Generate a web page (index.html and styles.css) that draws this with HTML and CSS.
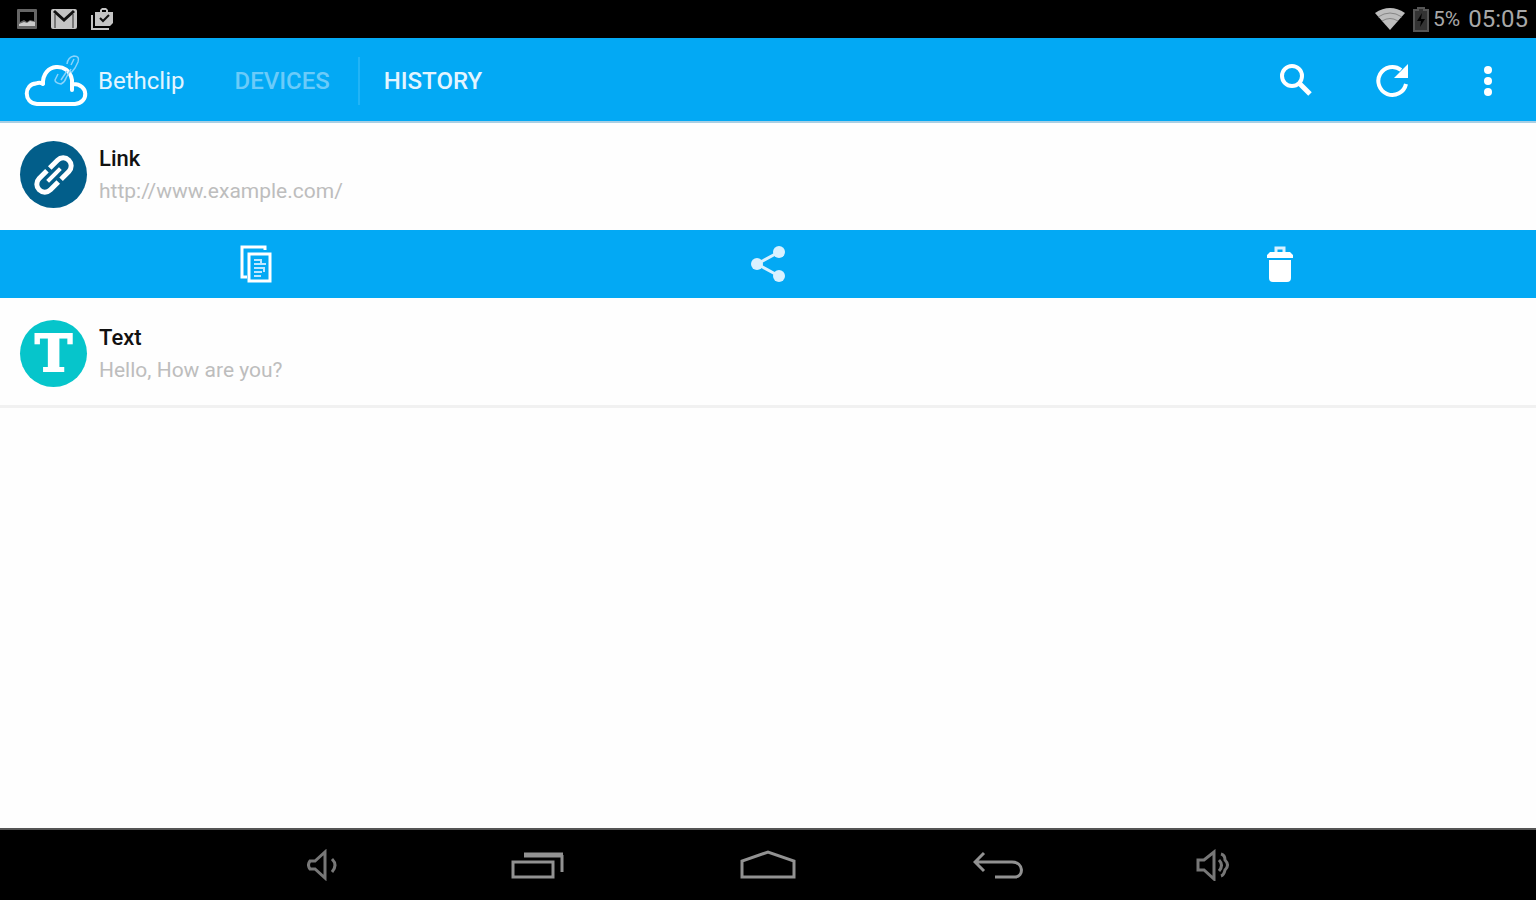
FILE: index.html
```html
<!DOCTYPE html>
<html lang="en">
<head>
<meta charset="utf-8">
<meta name="viewport" content="width=device-width, initial-scale=1">
<title>Bethclip</title>
<link rel="stylesheet" href="styles.css">
</head>
<body>
<div class="status-bar">
  <div class="status-left">
    <svg width="22" height="22" viewBox="0 0 22 22"><rect x="1" y="1" width="20" height="20" rx="1" fill="#666"/><path d="M4 4h14v9l-4-1-3 2-3-2-4 2z" fill="#000"/><path d="M3 16l5-2 3 1 3-2 5 1v4H3z" fill="#ccc"/></svg>
    <svg width="28" height="22" viewBox="0 0 28 22"><rect x="1" y="1" width="26" height="20" rx="2" fill="#c4c4c4"/><path d="M5 20V6M23 20V6" fill="none" stroke="#777" stroke-width="2"/><path d="M4 3l10 9 10-9" fill="none" stroke="#111" stroke-width="3"/></svg>
    <svg width="24" height="24" viewBox="0 0 24 24"><path d="M2 8v14h17" fill="none" stroke="#c4c4c4" stroke-width="2"/><path d="M5 5h5V3l2-2h4l2 2v2h5v11l-3 3H5zM12 5h4V3h-4z" fill="#c4c4c4" fill-rule="evenodd"/><path d="M10 11l3 3 6-6" fill="none" stroke="#111" stroke-width="2"/></svg>
  </div>
  <div class="status-right">
    <svg width="30" height="22" viewBox="0 0 30 22"><path d="M0 5Q15-5 30 5L15 22z" fill="#bdbdbd"/><path d="M3 9q12-8 24 0M7 13q8-5 16 0" fill="none" stroke="#858585"/></svg>
    <svg class="battery" width="16" height="25" viewBox="0 0 16 25"><path d="M5 1h6v2h4v21H1V3h4z" fill="#333" stroke="#555" stroke-width="2"/><path d="M9 6l-5 8h4l-1 6 5-8H8z" fill="#000"/></svg>
    <span class="percent">5%</span>
    <span class="clock">05:05</span>
  </div>
</div>
<header class="app-bar">
  <svg class="logo" width="64" height="54" viewBox="0 0 64 54"><path d="M13 50C-1 49 0 30 12 29.500Q16 28 19 30C18 9 45 7 48 26V36M49 30C65 30 65 49 51 50H13" fill="none" stroke="#fff" stroke-width="4" stroke-linecap="round" stroke-linejoin="round"/><path d="M43 10q1-7 7-8 6 0 4 6l-3 6-4 5M47 11l3-6M34 20l-3 6q0 3 6 4 4-2 5-6l5-9M37 26l6-9" fill="none" stroke="#8ad4fc" stroke-width="1.500" stroke-linejoin="round"/></svg>
  <h1 class="title">Bethclip</h1>
  <nav class="tabs">
    <button class="tab">DEVICES</button>
    <button class="tab tab-active">HISTORY</button>
  </nav>
  <div class="tools">
    <button class="tool" aria-label="Search"><svg width="34" height="34" viewBox="0 0 34 34" fill="none" stroke="#fff"><circle cx="13" cy="12" r="10" stroke-width="4"/><path d="M20 19l11 11" stroke-width="5"/></svg></button>
    <button class="tool" aria-label="Refresh"><svg width="34" height="34" viewBox="0 0 34 34"><path d="M26 6A14 14 0 1 0 31 20" fill="none" stroke="#fff" stroke-width="4"/><path d="M33 0v14H19z" fill="#fff"/></svg></button>
    <button class="tool" aria-label="More options"><svg width="10" height="32" viewBox="0 0 10 32" fill="#fff"><circle cx="5" cy="5" r="4"/><circle cx="5" cy="16" r="4"/><circle cx="5" cy="27" r="4"/></svg></button>
  </div>
</header>
<main class="history">
  <article class="item item-open">
    <div class="badge badge-link"><svg width="48" height="48" viewBox="0 0 48 48"><g transform="rotate(-45 24 24)" fill="none" stroke="#fff" stroke-width="5"><path d="M22 16H11a8 8 0 0 0 0 16h11M26 16h11a8 8 0 0 1 0 16H26"/><path d="M15 24h18" stroke-width="4"/></g></svg></div>
    <div>
      <h2 class="item-title">Link</h2>
      <p class="item-text">http://www.example.com/</p>
    </div>
  </article>
  <div class="actions">
    <button class="action" aria-label="Copy"><svg width="34" height="38" viewBox="0 0 34 38"><path d="M26 5V2H3v30h5" fill="none" stroke="#fff" stroke-width="3"/><path d="M10 9h21v27H10z" fill="none" stroke="#fff" stroke-width="3"/><path d="M15 15h7v4h5M15 19h7M15 23h11M15 27h8M15 31h7M25 23v4" fill="none" stroke="#bfe7ff" stroke-width="2"/></svg></button>
    <button class="action" aria-label="Share"><svg width="36" height="38" viewBox="0 0 36 38" fill="#d9f1ff"><path d="M29 7L7 19l22 12" fill="none" stroke="#d9f1ff" stroke-width="3"/><circle cx="7" cy="19" r="6"/><circle cx="29" cy="7" r="6"/><circle cx="29" cy="31" r="6"/></svg></button>
    <button class="action" aria-label="Delete"><svg width="28" height="38" viewBox="0 0 28 38"><path d="M10 8V3h8v5" fill="none" stroke="#d9f1ff" stroke-width="3"/><path d="M4 7h20l3 3v3H1v-3zM3 15h22v18q0 4-4 4H7q-4 0-4-4z" fill="#fff"/></svg></button>
  </div>
  <article class="item item-last">
    <div class="badge badge-text">T</div>
    <div>
      <h2 class="item-title">Text</h2>
      <p class="item-text">Hello, How are you?</p>
    </div>
  </article>
</main>
<nav class="system-bar" aria-label="System">
  <button class="system-key" aria-label="Volume down"><svg width="32" height="32" viewBox="0 0 32 32" stroke="#777"><path d="M3 12h5l10-9v26l-10-9H3q-3-4 0-8zM25 10q6 6 0 13"/></svg></button>
  <button class="system-key" aria-label="Recent apps"><svg width="54" height="32" viewBox="0 0 54 32" stroke="#929292"><path d="M2 13h40v15H2z"/><path class="thick" d="M13 6h39"/><path d="M51 6v17"/></svg></button>
  <button class="system-key" aria-label="Home"><svg width="56" height="32" viewBox="0 0 56 32" stroke="#929292"><path d="M2 28V12L28 3l26 9v16z"/></svg></button>
  <button class="system-key" aria-label="Back"><svg width="50" height="32" viewBox="0 0 50 32" stroke="#929292"><path d="M11 4L2 13l9 9M2 13h37c12 0 12 15 3 15H22"/></svg></button>
  <button class="system-key" aria-label="Volume up"><svg width="36" height="32" viewBox="0 0 36 32" stroke="#777"><path d="M3 11h6l10-8v27L9 21H3zM24 11q5 5 0 11M26 5q4 1 4 6 5 5 0 10-1 5-4 6"/></svg></button>
</nav>
</body>
</html>
```
FILE: styles.css
```css
* {
  box-sizing: border-box;
}

body {
  display: flex;
  flex-direction: column;
  min-height: 100vh;
  margin: 0;
  background: #fefefe;
  font-family: Roboto, "Liberation Sans", sans-serif;
}

button {
  padding: 0;
  border: 0;
  background: none;
  color: inherit;
  font: inherit;
  cursor: pointer;
}

svg {
  display: block;
}

h1, h2, p {
  margin: 0;
}

.status-bar {
  display: flex;
  justify-content: space-between;
  align-items: center;
  height: 38px;
  padding: 0 8px 0 16px;
  background: #000;
  color: #a8a8a8;
}

.status-left {
  display: flex;
  align-items: center;
  gap: 12px;
}

.status-right {
  display: flex;
  align-items: center;
  line-height: 24px;
}

.battery {
  margin-left: 8px;
}

.percent {
  margin: 0 8px 0 4px;
  font-size: 21px;
}

.clock {
  font-size: 24px;
}

.app-bar {
  display: flex;
  align-items: center;
  height: 85px;
  padding: 2px 0 0 24px;
  border-bottom: 2px solid #a9cfe4;
  background: #03a9f4;
  color: #e3f5ff;
}

.title {
  margin-left: 10px;
  font-size: 24px;
  font-weight: 400;
}

.tabs {
  display: flex;
  margin-left: 26px;
}

.tab {
  height: 48px;
  padding: 0 28px 0 24px;
  color: #6bcbf9;
  font-size: 24px;
  font-weight: 500;
}

.tab-active {
  border-left: 2px solid #22b4f6;
  color: #e3f5ff;
}

.tools {
  display: flex;
  margin-left: auto;
}

.tool {
  display: grid;
  place-items: center;
  width: 96px;
  height: 80px;
}

.history {
  flex: 1;
}

.item {
  display: flex;
  align-items: center;
  gap: 12px;
  height: 107px;
  padding: 0 20px;
}

.item-open {
  padding-bottom: 4px;
}

.item-last {
  height: 110px;
  padding-top: 4px;
  border-bottom: 3px solid #f1f1f1;
}

.badge {
  display: grid;
  place-items: center;
  width: 67px;
  height: 67px;
  border-radius: 50%;
  color: #fff;
}

.badge-link {
  background: #025e8a;
}

.badge-text {
  background: #06c5cb;
  font: bold 50px/67px "DejaVu Serif", serif;
  -webkit-text-stroke: 2px #fff;
}

.item-title {
  color: #111;
  font-size: 22px;
  font-weight: 500;
  line-height: 32px;
}

.item-text {
  color: #bdbdbd;
  font-size: 21px;
  line-height: 32px;
}

.actions {
  display: grid;
  grid-template-columns: repeat(3, 1fr);
  height: 68px;
  background: #03a9f4;
}

.action {
  display: grid;
  place-items: center;
}

.system-bar {
  display: grid;
  grid-template-columns: 20fr 23fr 23fr 23fr 20fr;
  height: 72px;
  padding: 0 14.5%;
  border-top: 2px solid #555;
  background: #000;
}

.system-key {
  display: grid;
  place-items: center;
}

.system-key svg {
  fill: none;
  stroke-width: 3px;
}

.system-key .thick {
  stroke-width: 5px;
}
```
